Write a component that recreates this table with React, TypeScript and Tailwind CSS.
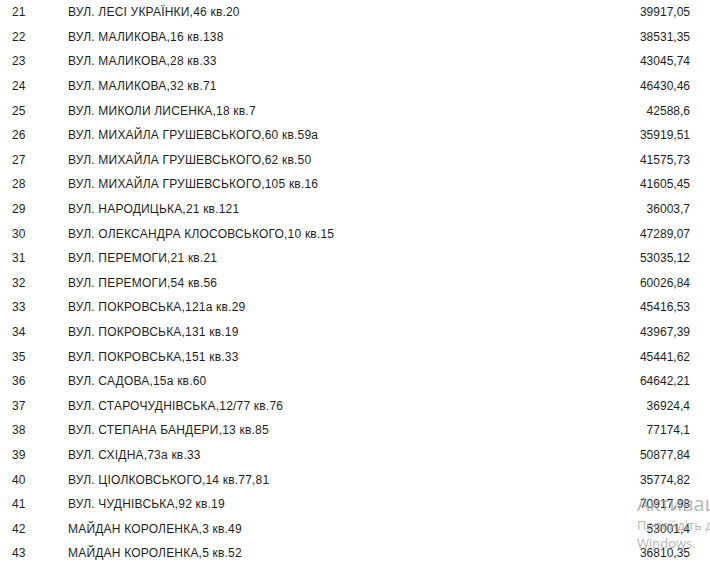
const rows: [string, string, string][] = [
    ["21", "ВУЛ. ЛЕСІ УКРАЇНКИ,46 кв.20", "39917,05"],
    ["22", "ВУЛ. МАЛИКОВА,16 кв.138", "38531,35"],
    ["23", "ВУЛ. МАЛИКОВА,28 кв.33", "43045,74"],
    ["24", "ВУЛ. МАЛИКОВА,32 кв.71", "46430,46"],
    ["25", "ВУЛ. МИКОЛИ ЛИСЕНКА,18 кв.7", "42588,6"],
    ["26", "ВУЛ. МИХАЙЛА ГРУШЕВСЬКОГО,60 кв.59а", "35919,51"],
    ["27", "ВУЛ. МИХАЙЛА ГРУШЕВСЬКОГО,62 кв.50", "41575,73"],
    ["28", "ВУЛ. МИХАЙЛА ГРУШЕВСЬКОГО,105 кв.16", "41605,45"],
    ["29", "ВУЛ. НАРОДИЦЬКА,21 кв.121", "36003,7"],
    ["30", "ВУЛ. ОЛЕКСАНДРА КЛОСОВСЬКОГО,10 кв.15", "47289,07"],
    ["31", "ВУЛ. ПЕРЕМОГИ,21 кв.21", "53035,12"],
    ["32", "ВУЛ. ПЕРЕМОГИ,54 кв.56", "60026,84"],
    ["33", "ВУЛ. ПОКРОВСЬКА,121а кв.29", "45416,53"],
    ["34", "ВУЛ. ПОКРОВСЬКА,131 кв.19", "43967,39"],
    ["35", "ВУЛ. ПОКРОВСЬКА,151 кв.33", "45441,62"],
    ["36", "ВУЛ. САДОВА,15а кв.60", "64642,21"],
    ["37", "ВУЛ. СТАРОЧУДНІВСЬКА,12/77 кв.76", "36924,4"],
    ["38", "ВУЛ. СТЕПАНА БАНДЕРИ,13 кв.85", "77174,1"],
    ["39", "ВУЛ. СХІДНА,73а кв.33", "50877,84"],
    ["40", "ВУЛ. ЦІОЛКОВСЬКОГО,14 кв.77,81", "35774,82"],
    ["41", "ВУЛ. ЧУДНІВСЬКА,92 кв.19", "70917,98"],
    ["42", "МАЙДАН КОРОЛЕНКА,3 кв.49", "53001,4"],
    ["43", "МАЙДАН КОРОЛЕНКА,5 кв.52", "36810,35"],
]

const App = () => {
    return (
        <div className="relative w-[710px] h-[568px] overflow-hidden bg-white text-[12px] text-[#1e1e1e] font-['Liberation_Sans',Arial,sans-serif]">
            <div className="flex flex-col">
                {rows.map(([n, addr, sum]) => (
                    <div key={n} className="flex items-center h-[24.6px]">
                        <div className="w-[68px] pl-3">{n}</div>
                        <div className="flex-1 tracking-[0.2px]">{addr}</div>
                        <div className="w-[120px] pr-5 text-right">{sum}</div>
                    </div>
                ))}
            </div>
            <div className="absolute left-[637px] top-[492px] pointer-events-none text-[#a0a0a0]/80 font-['Open_Sans',sans-serif] whitespace-nowrap">
                <div className="text-[20px] leading-[24px]">Активація Windows</div>
                <div className="text-[13px] leading-[18px]">Перейдіть до розділу</div>
                <div className="text-[13px] leading-[18px]">Windows.</div>
            </div>
        </div>
    )
}

export default App
